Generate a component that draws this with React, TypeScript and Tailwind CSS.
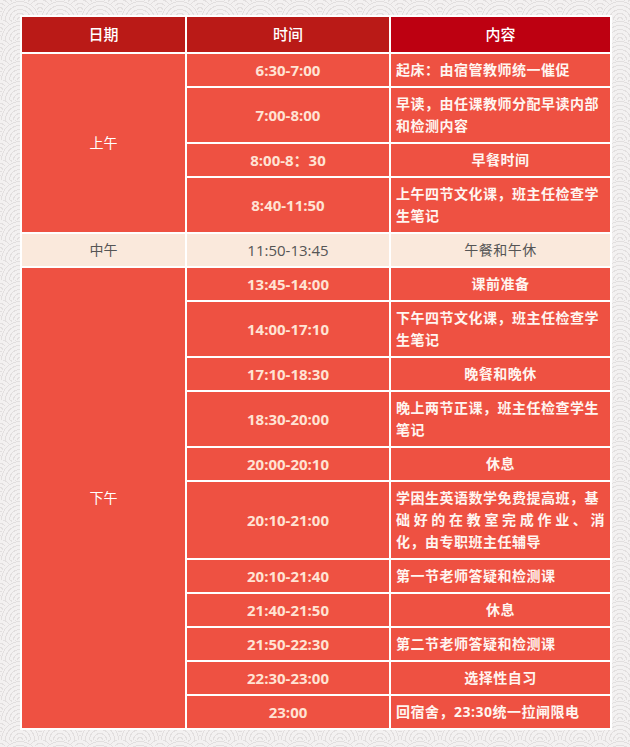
import React from "react";

type Row = { time: string; lines: string[]; align: "left" | "center" | "justify3" };

const upper: Row[] = [
  { time: "6:30-7:00", lines: ["起床：由宿管教师统一催促"], align: "left" },
  { time: "7:00-8:00", lines: ["早读，由任课教师分配早读内部", "和检测内容"], align: "left" },
  { time: "8:00-8：30", lines: ["早餐时间"], align: "center" },
  { time: "8:40-11:50", lines: ["上午四节文化课，班主任检查学", "生笔记"], align: "left" },
];

const lower: Row[] = [
  { time: "13:45-14:00", lines: ["课前准备"], align: "center" },
  { time: "14:00-17:10", lines: ["下午四节文化课，班主任检查学", "生笔记"], align: "left" },
  { time: "17:10-18:30", lines: ["晚餐和晚休"], align: "center" },
  { time: "18:30-20:00", lines: ["晚上两节正课，班主任检查学生", "笔记"], align: "left" },
  { time: "20:00-20:10", lines: ["休息"], align: "center" },
  {
    time: "20:10-21:00",
    lines: ["学困生英语数学免费提高班，基", "础好的在教室完成作业、消", "化，由专职班主任辅导"],
    align: "justify3",
  },
  { time: "20:10-21:40", lines: ["第一节老师答疑和检测课"], align: "left" },
  { time: "21:40-21:50", lines: ["休息"], align: "center" },
  { time: "21:50-22:30", lines: ["第二节老师答疑和检测课"], align: "left" },
  { time: "22:30-23:00", lines: ["选择性自习"], align: "center" },
  { time: "23:00", lines: ["回宿舍，23:30统一拉闸限电"], align: "left" },
];

const cell = "border-2 border-white px-[5px] py-[5px] leading-[22px] text-[14px] align-middle [text-spacing-trim:space-all]";

function Content({ row }: { row: Row }) {
  if (row.align === "center") {
    return <td className={`${cell} bg-[#ee5142] text-[#fff5f0] font-bold text-center tracking-[0.5px]`}>{row.lines[0]}</td>;
  }
  if (row.align === "justify3") {
    return (
      <td className={`${cell} bg-[#ee5142] text-[#fff5f0] font-bold text-left tracking-[0.5px]`}>
        <span className="block whitespace-nowrap">{row.lines[0]}</span>
        <span className="block text-justify [text-align-last:justify]">{row.lines[1]}</span>
        <span className="block">{row.lines[2]}</span>
      </td>
    );
  }
  return (
    <td className={`${cell} bg-[#ee5142] text-[#fff5f0] font-bold text-left tracking-[0.5px]`}>
      {row.lines.map((l, i) => (
        <span key={i} className="block whitespace-nowrap">
          {l}
        </span>
      ))}
    </td>
  );
}

function TimeCell({ t }: { t: string }) {
  return <td className={`${cell} !text-[15px] bg-[#ee5142] text-[#ffe3d4] font-bold text-center`}>{t}</td>;
}

export default function App() {
  const bg =
    "bg-[#f3f1f1] bg-[radial-gradient(circle_at_50%_100%,#f3f1f1_0_2px,#e2dfdf_2px_3px,#f3f1f1_3px_6px,#e2dfdf_6px_7px,#f3f1f1_7px_10px,#e2dfdf_10px_11px,#f3f1f1_11px_14px,#e2dfdf_14px_15px,#f3f1f1_15px_18px,#e2dfdf_18px_19px,#f3f1f1_19px_20px,transparent_20px),radial-gradient(circle_at_50%_100%,#f3f1f1_0_2px,#e2dfdf_2px_3px,#f3f1f1_3px_6px,#e2dfdf_6px_7px,#f3f1f1_7px_10px,#e2dfdf_10px_11px,#f3f1f1_11px_14px,#e2dfdf_14px_15px,#f3f1f1_15px_18px,#e2dfdf_18px_19px,#f3f1f1_19px_20px,transparent_20px)] bg-[length:40px_20px,40px_20px] bg-[position:0_0,20px_10px]";
  return (
    <div
      className={`w-[630px] h-[747px] overflow-hidden pt-[15px] pl-[20px] ${bg}`}
      style={{ fontFamily: '"Open Sans", "Noto Sans CJK SC", sans-serif' }}
    >
      <table className="border-collapse table-fixed w-[590px]">
        <colgroup>
          <col className="w-[165px]" />
          <col className="w-[204px]" />
          <col className="w-[221px]" />
        </colgroup>
        <thead>
          <tr>
            <th className="border-2 border-white bg-[#ba1a17] text-white font-medium text-[15px] leading-[25px] py-[5px] text-center">日期</th>
            <th className="border-2 border-white bg-[#ba1a17] text-white font-medium text-[15px] leading-[25px] py-[5px] text-center">时间</th>
            <th className="border-2 border-white bg-[#bd0011] text-white font-medium text-[15px] leading-[25px] py-[5px] text-center">内容</th>
          </tr>
        </thead>
        <tbody>
          {upper.map((r, i) => (
            <tr key={"u" + i}>
              {i === 0 && (
                <td rowSpan={upper.length} className={`${cell} bg-[#ee5142] text-white text-center`}>
                  上午
                </td>
              )}
              <TimeCell t={r.time} />
              <Content row={r} />
            </tr>
          ))}
          <tr>
            <td className={`${cell} bg-[#fae9dc] text-[#555] text-center`}>中午</td>
            <td className={`${cell} !text-[15px] bg-[#fae9dc] text-[#555] text-center`}>11:50-13:45</td>
            <td className={`${cell} bg-[#fae9dc] text-[#555] text-center tracking-[0.5px]`}>午餐和午休</td>
          </tr>
          {lower.map((r, i) => (
            <tr key={"l" + i}>
              {i === 0 && (
                <td rowSpan={lower.length} className={`${cell} bg-[#ee5142] text-white text-center`}>
                  下午
                </td>
              )}
              <TimeCell t={r.time} />
              <Content row={r} />
            </tr>
          ))}
        </tbody>
      </table>
    </div>
  );
}
